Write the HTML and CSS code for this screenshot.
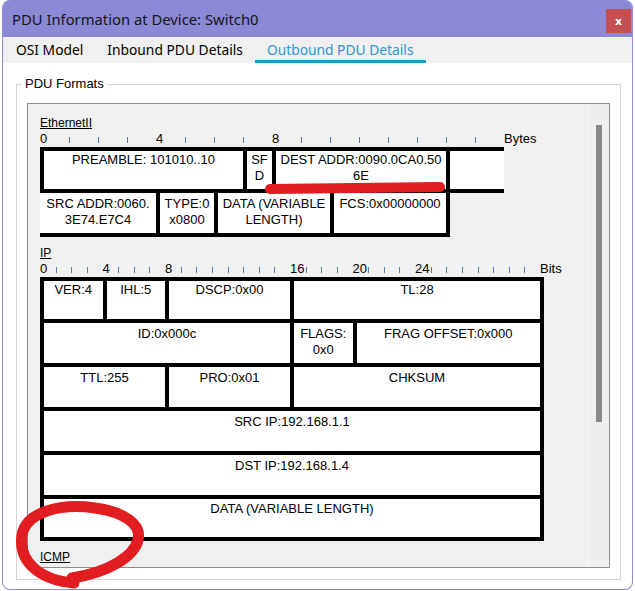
FILE: index.html
```html
<!DOCTYPE html>
<html>
<head>
<meta charset="utf-8">
<link rel="stylesheet" href="styles.css">
</head>
<body>
<div class="window">
  <div class="titlebar">
    <span class="title">PDU Information at Device: Switch0</span>
    <div class="close">x</div>
  </div>
  <div class="tabs">
    <span class="tab">OSI Model</span>
    <span class="tab">Inbound PDU Details</span>
    <span class="tab active">Outbound PDU Details</span>
  </div>
  <div class="content">
    <fieldset class="formats">
      <legend>PDU Formats</legend>
      <div class="pane">
        <div class="scroll">
          <section class="pdu">
            <div class="plabel">EthernetII</div>
            <div class="ruler bytes">
              <span class="s">0</span><span class="s"><i class="t"></i></span><span class="s"><i class="t"></i></span><span class="s"><i class="t"></i></span>
              <span class="s">4</span><span class="s"><i class="t"></i></span><span class="s"><i class="t"></i></span><span class="s"><i class="t"></i></span>
              <span class="s">8</span><span class="s"><i class="t"></i></span><span class="s"><i class="t"></i></span><span class="s"><i class="t"></i></span><span class="s"><i class="t"></i></span><span class="s"><i class="t"></i></span><span class="s"><i class="t"></i></span><span class="s"><i class="t"></i></span>
              <span class="s">Bytes</span>
            </div>
            <div class="grid eth">
              <div class="cell r1 c7">PREAMBLE: 101010..10</div>
              <div class="cell r1 c1">SF<br>D</div>
              <div class="cell r1 c6">DEST ADDR:0090.0CA0.50<br>6E</div>
              <div class="cell r1 c2 openr"></div>
              <div class="cell c4 openl">SRC ADDR:0060.<br>3E74.E7C4</div>
              <div class="cell c2">TYPE:0<br>x0800</div>
              <div class="cell c4">DATA (VARIABLE<br>LENGTH)</div>
              <div class="cell c4">FCS:0x00000000</div>
            </div>
          </section>
          <section class="pdu next">
            <div class="plabel">IP</div>
            <div class="ruler bits">
              <span class="s">0</span><span class="s"><i class="t"></i></span><span class="s"><i class="t"></i></span><span class="s"><i class="t"></i></span>
              <span class="s">4</span><span class="s"><i class="t"></i></span><span class="s"><i class="t"></i></span><span class="s"><i class="t"></i></span>
              <span class="s">8</span><span class="s"><i class="t"></i></span><span class="s"><i class="t"></i></span><span class="s"><i class="t"></i></span><span class="s"><i class="t"></i></span><span class="s"><i class="t"></i></span><span class="s"><i class="t"></i></span><span class="s"><i class="t"></i></span>
              <span class="s">16</span><span class="s"><i class="t"></i></span><span class="s"><i class="t"></i></span><span class="s"><i class="t"></i></span>
              <span class="s">20</span><span class="s"><i class="t"></i></span><span class="s"><i class="t"></i></span><span class="s"><i class="t"></i></span>
              <span class="s">24</span><span class="s"><i class="t"></i></span><span class="s"><i class="t"></i></span><span class="s"><i class="t"></i></span><span class="s"><i class="t"></i></span><span class="s"><i class="t"></i></span><span class="s"><i class="t"></i></span><span class="s"><i class="t"></i></span>
              <span class="s">Bits</span>
            </div>
            <div class="grid ip">
              <div class="cell r1 b4">VER:4</div>
              <div class="cell r1 b4">IHL:5</div>
              <div class="cell r1 b8">DSCP:0x00</div>
              <div class="cell r1 b16">TL:28</div>
              <div class="cell b16">ID:0x000c</div>
              <div class="cell b4">FLAGS:<br>0x0</div>
              <div class="cell b12">FRAG OFFSET:0x000</div>
              <div class="cell b8">TTL:255</div>
              <div class="cell b8">PRO:0x01</div>
              <div class="cell b16">CHKSUM</div>
              <div class="cell b32">SRC IP:192.168.1.1</div>
              <div class="cell b32">DST IP:192.168.1.4</div>
              <div class="cell b32 last">DATA (VARIABLE LENGTH)</div>
            </div>
          </section>
          <section class="pdu next">
            <div class="plabel">ICMP</div>
            <div class="ruler bits">
              <span class="s">0</span><span class="s"><i class="t"></i></span><span class="s"><i class="t"></i></span><span class="s"><i class="t"></i></span><span class="s"><i class="t"></i></span><span class="s"><i class="t"></i></span><span class="s"><i class="t"></i></span><span class="s"><i class="t"></i></span>
              <span class="s">8</span><span class="s"><i class="t"></i></span><span class="s"><i class="t"></i></span><span class="s"><i class="t"></i></span><span class="s"><i class="t"></i></span><span class="s"><i class="t"></i></span><span class="s"><i class="t"></i></span><span class="s"><i class="t"></i></span>
              <span class="s">16</span><span class="s"><i class="t"></i></span><span class="s"><i class="t"></i></span><span class="s"><i class="t"></i></span><span class="s"><i class="t"></i></span><span class="s"><i class="t"></i></span><span class="s"><i class="t"></i></span><span class="s"><i class="t"></i></span><span class="s"><i class="t"></i></span><span class="s"><i class="t"></i></span><span class="s"><i class="t"></i></span><span class="s"><i class="t"></i></span><span class="s"><i class="t"></i></span><span class="s"><i class="t"></i></span><span class="s"><i class="t"></i></span><span class="s"><i class="t"></i></span>
              <span class="s">Bits</span>
            </div>
          </section>
        </div>
        <div class="track"><div class="thumb"></div></div>
      </div>
    </fieldset>
  </div>
</div>
<svg class="marks" width="635" height="591" viewBox="0 0 635 591">
  <path d="M270 189 C 330 188, 390 188, 440 187" fill="none" stroke="#e11d22" stroke-width="10" stroke-linecap="round"/>
  <path d="M74 583 C 40 580, 18 562, 22 535 C 26 512, 60 503, 95 508 C 125 512, 142 525, 138 540 C 134 556, 110 572, 72 578" fill="none" stroke="#e11d22" stroke-width="11" stroke-linecap="round"/>
</svg>
</body>
</html>
```
FILE: styles.css
```css
* { box-sizing: border-box; }

body {
  margin: 0;
  width: 635px;
  height: 591px;
  overflow: hidden;
  position: relative;
  background: #ffffff;
  font-family: "Liberation Sans", Arial, sans-serif;
  color: #000;
}

.window {
  margin-left: 2px;
  width: 631px;
  height: 590px;
  border: 1px solid #8e8ad6;
  border-top: none;
  border-radius: 8px;
  overflow: hidden;
  background: #ffffff;
  display: flex;
  flex-direction: column;
}

.titlebar {
  height: 37px;
  flex: none;
  background: #8b88d6;
  display: flex;
  align-items: center;
  padding-left: 9px;
  font-family: "Noto Sans", "Open Sans", sans-serif;
  font-size: 14.8px;
  color: #161616;
}

.title { flex: 1; }

.close {
  align-self: flex-start;
  margin-top: 9px;
  margin-right: 1px;
  width: 25px;
  height: 24px;
  background: #c64f4f;
  color: #fff;
  font-family: "DejaVu Sans", sans-serif;
  font-size: 11px;
  font-weight: bold;
  display: flex;
  align-items: center;
  justify-content: center;
}

.tabs {
  height: 26px;
  flex: none;
  background: #f0f0f0;
  display: flex;
  padding-left: 1px;
}

.tab {
  padding: 4px 12px 0;
  font-family: "Noto Sans", "Open Sans", sans-serif;
  font-size: 13.8px;
  line-height: 18px;
  color: #000;
  white-space: nowrap;
}

.tab.active {
  color: #2b98d4;
  border-bottom: 3px solid #1d99d6;
}

.content {
  flex: 1;
  padding: 13px 11px 9px 13px;
}

.formats {
  margin: 0;
  min-width: 0;
  border: 1px solid #d6d6d6;
  padding: 11px 10px 11px 5px;
}

.formats legend {
  padding: 0 3px;
  font-size: 13px;
  line-height: 16px;
  color: #000;
}

.pane {
  margin-left: 5px;
  height: 465px;
  border: 1px solid #8d8d8d;
  background: #f0f0f0;
  display: flex;
}

.scroll {
  flex: 1;
  overflow: hidden;
  padding: 11px 0 0 12px;
}

.track {
  width: 21px;
  flex: none;
  border-left: 1px solid #fbfbfb;
  background: #efefef;
  padding: 21px 0 0 7px;
}

.thumb {
  width: 6px;
  height: 297px;
  background: #898989;
}

.pdu.next { margin-top: 12px; }

.plabel {
  font-size: 12px;
  line-height: 16px;
  text-decoration: underline;
}

.ruler {
  display: flex;
  height: 16px;
  line-height: 16px;
  font-size: 13px;
  white-space: nowrap;
}

.ruler .s { flex: none; }
.ruler.bytes .s { width: 29px; }
.ruler.bits .s { width: 15.625px; }

.t {
  display: inline-block;
  width: 1px;
  height: 6px;
  background: #5676ad;
  vertical-align: baseline;
}

.grid {
  display: grid;
  margin-bottom: 4px;
}

.grid.eth {
  grid-template-columns: repeat(16, 29px);
  grid-template-rows: 42px 44px;
}

.grid.ip {
  grid-template-columns: repeat(32, 15.625px);
  grid-template-rows: 42px 44px 44px 44px 44px 42px;
}

.cell {
  border: 4px solid #000;
  margin: 0 -4px -4px 0;
  background: #fff;
  text-align: center;
  font-size: 13px;
  line-height: 16px;
  padding-top: 3px;
  white-space: nowrap;
}

.cell.r1 { padding-top: 1px; }
.cell.last { padding-top: 2px; }

.cell.openr { border-right: 0; margin-right: 0; }
.cell.openl { border-left: 0; }

.c1 { grid-column: span 1; }
.c2 { grid-column: span 2; }
.c4 { grid-column: span 4; }
.c6 { grid-column: span 6; }
.c7 { grid-column: span 7; }

.b4 { grid-column: span 4; }
.b8 { grid-column: span 8; }
.b12 { grid-column: span 12; }
.b16 { grid-column: span 16; }
.b32 { grid-column: span 32; }

.marks {
  position: absolute;
  left: 0;
  top: 0;
  pointer-events: none;
}
```
